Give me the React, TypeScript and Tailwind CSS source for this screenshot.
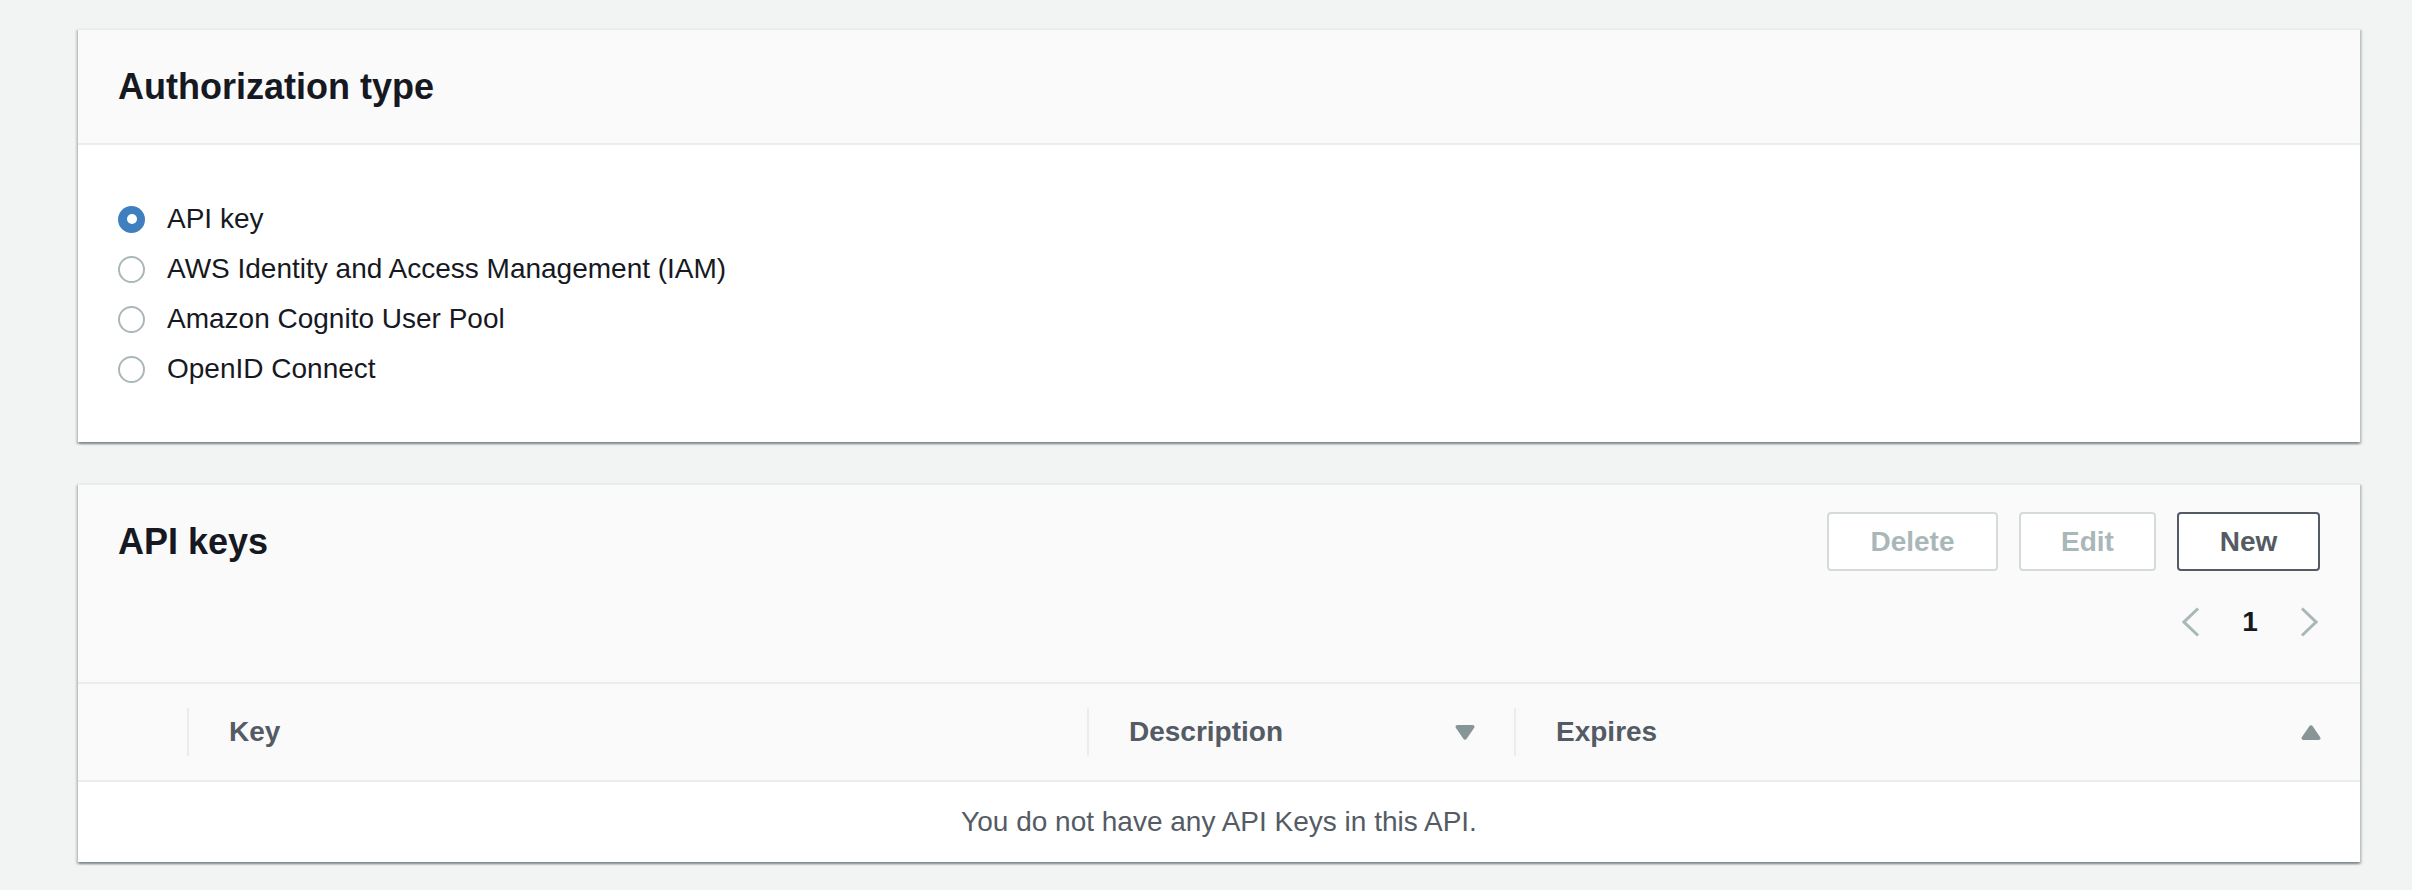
import { useState } from 'react';

const authOptions = [
  'API key',
  'AWS Identity and Access Management (IAM)',
  'Amazon Cognito User Pool',
  'OpenID Connect',
];

const cardShadow =
  'shadow-[0_2px_2px_0_rgba(0,28,36,0.3),2px_2px_2px_0_rgba(0,28,36,0.15),-2px_2px_2px_0_rgba(0,28,36,0.15)]';

const Triangle = ({ up }: { up?: boolean }) => (
  <svg width="20" height="15" viewBox="0 0 20 15" className={up ? '' : 'rotate-180'}>
    <path d="M8.3 1.2 Q10 -0.6 11.7 1.2 L19.2 12.2 Q20.2 14.6 17.6 15 L2.4 15 Q-0.2 14.6 0.8 12.2 Z" fill="#879596" />
  </svg>
);

const Chevron = ({ right }: { right?: boolean }) => (
  <svg width="18" height="30" viewBox="0 0 18 30">
    <path
      d={right ? 'M2 1.5 L16 15 L2 28.5' : 'M16 1.5 L2 15 L16 28.5'}
      fill="none"
      stroke="#aab7b8"
      strokeWidth="3"
    />
  </svg>
);

const HeaderCell = ({ label, sort }: { label: string; sort?: 'up' | 'down' }) => (
  <div className="flex items-center h-full">
    <div className="flex flex-1 items-center justify-between h-[48px] border-l-2 border-[#eaeded] pl-[40px] pr-[39px]">
      <span className="text-[28px] font-bold text-[#545b64]">{label}</span>
      {sort && <Triangle up={sort === 'up'} />}
    </div>
  </div>
);

export default function App() {
  const [auth, setAuth] = useState(0);

  return (
    <div className="min-h-[890px] bg-[#f2f3f3] pt-[28px] pl-[78px] pr-[52px] font-['Liberation_Sans',Arial,sans-serif] text-[#16191f]">
      {/* Authorization type */}
      <section className={`bg-white border-t-2 border-[#eaeded] ${cardShadow}`}>
        <div className="h-[115px] flex items-center px-[40px] bg-[#fafafa] border-b-2 border-[#eaeded]">
          <h2 className="text-[36px] font-bold">Authorization type</h2>
        </div>
        <div className="px-[40px] pt-[49px] pb-[48px]">
          {authOptions.map((opt, i) => (
            <label
              key={opt}
              className="flex items-center gap-[22px] h-[50px] cursor-pointer"
              onClick={() => setAuth(i)}
            >
              {auth === i ? (
                <span className="w-[27px] h-[27px] rounded-full bg-[#3f7fbf] flex items-center justify-center">
                  <span className="w-[10px] h-[10px] rounded-full bg-white" />
                </span>
              ) : (
                <span className="w-[27px] h-[27px] rounded-full border-[2.5px] border-[#aab7b8] bg-white" />
              )}
              <span className="text-[28px] leading-[50px]">{opt}</span>
            </label>
          ))}
        </div>
      </section>

      {/* API keys */}
      <section className={`mt-[41px] bg-white border-t-2 border-[#eaeded] ${cardShadow}`}>
        <div className="bg-[#fafafa] border-b-2 border-[#eaeded] px-[40px] pt-[27px] pb-[40px]">
          <div className="flex items-center justify-between h-[59px]">
            <h2 className="text-[36px] font-bold">API keys</h2>
            <div className="flex gap-[21px]">
              <button className="w-[171px] h-[59px] rounded-[4px] border-2 border-[#d5dbdb] bg-white text-[28px] font-bold text-[#aab7b8]">
                Delete
              </button>
              <button className="w-[137px] h-[59px] rounded-[4px] border-2 border-[#d5dbdb] bg-white text-[28px] font-bold text-[#aab7b8]">
                Edit
              </button>
              <button className="w-[143px] h-[59px] rounded-[4px] border-2 border-[#545b64] bg-white text-[28px] font-bold text-[#545b64]">
                New
              </button>
            </div>
          </div>
          <div className="flex justify-end items-center gap-[21px] mt-[31px] h-[40px] pr-[2px]">
            <Chevron />
            <span className="w-[58px] text-center text-[28px] font-bold">1</span>
            <Chevron right />
          </div>
        </div>

        <div className="grid grid-cols-[109px_900px_427px_1fr] h-[98px] bg-[#fafafa] border-b-2 border-[#eaeded]">
          <div />
          <HeaderCell label="Key" />
          <HeaderCell label="Description" sort="down" />
          <HeaderCell label="Expires" sort="up" />
        </div>

        <div className="h-[80px] flex items-center justify-center text-[28px] text-[#545b64]">
          You do not have any API Keys in this API.
        </div>
      </section>
    </div>
  );
}
